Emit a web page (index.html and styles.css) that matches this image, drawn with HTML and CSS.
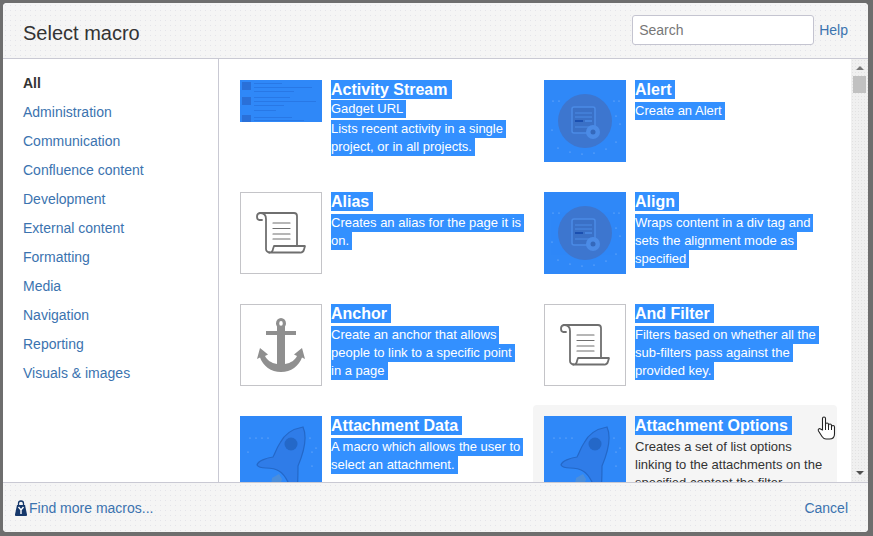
FILE: index.html
```html
<!DOCTYPE html>
<html lang="en">
<head>
    <meta charset="UTF-8">
    <title>Select macro</title>
    <link rel="stylesheet" href="styles.css">
</head>
<body>
    <svg class="icon-defs" width="0" height="0">
        <symbol id="icon-scroll" viewBox="0 0 82 82">
            <g fill="none" stroke="#6f6f6f" stroke-width="1.8" stroke-linejoin="round" stroke-linecap="round">
                <path d="M22 28 h-3 a2.5 3.5 0 0 1 -2 -3.5 a3.5 3.5 0 0 1 3 -3.5 h34 a3 3 0 0 1 3 3 v30"/>
                <path d="M20 21 c4 0 6 2 6 6 v30 a3.5 3.5 0 0 0 3.5 3.5"/>
                <path d="M29.5 60.5 h30 a4 4 0 0 0 4.5 -3 l1 -3.5 h-31 l-1 3 a3.5 3.5 0 0 1 -4 3.5"/>
                <path d="M33 31 h17 M33 36.500 h17 M33 42 h17 M33 47 h17" stroke-width="1.200"/>
            </g>
        </symbol>
        <symbol id="icon-gear" viewBox="0 0 82 82">
            <rect width="82" height="82" fill="#2f88f8"/>
            <g fill="#cfe3ff" opacity="0.6">
                <circle cx="9" cy="21" r="0.6"/><circle cx="15" cy="21" r="0.6"/><circle cx="70" cy="21" r="0.6"/><circle cx="75" cy="21" r="0.6"/>
                <circle cx="72" cy="36" r="0.6"/><circle cx="76" cy="44" r="0.6"/><circle cx="8" cy="50" r="0.6"/><circle cx="14" cy="68" r="0.6"/>
                <circle cx="26" cy="72" r="0.6"/><circle cx="38" cy="74" r="0.6"/><circle cx="50" cy="73" r="0.6"/><circle cx="62" cy="69" r="0.6"/><circle cx="72" cy="62" r="0.6"/>
            </g>
            <circle cx="41" cy="41" r="27" fill="#3d76cf"/>
            <rect x="28" y="27" width="23" height="26" rx="2" fill="#3a70c6" stroke="#4b8be6" stroke-width="1.500"/>
            <path d="M31 33 h17 M31 37 h17 M31 47 h17" stroke="#4b8be6"/>
            <path d="M31 41 h8" stroke="#1a4fb0" stroke-width="2"/>
            <path d="M41 41 h7" stroke="#4b8be6" stroke-width="1.500"/>
            <circle cx="49" cy="52" r="7" fill="#4b8be6"/>
            <circle cx="49" cy="52" r="2.500" fill="#3468bb"/>
        </symbol>
        <symbol id="icon-rocket" viewBox="0 0 82 82">
            <rect width="82" height="82" fill="#2f88f8"/>
            <g fill="#cfe3ff" opacity="0.6">
                <circle cx="10" cy="22" r="0.6"/><circle cx="16" cy="22" r="0.6"/><circle cx="22" cy="22" r="0.6"/><circle cx="28" cy="22" r="0.6"/>
                <circle cx="70" cy="22" r="0.6"/><circle cx="8" cy="36" r="0.6"/><circle cx="72" cy="36" r="0.6"/><circle cx="76" cy="32" r="0.6"/><circle cx="72" cy="50" r="0.6"/>
            </g>
            <path d="M32 62 l7 -4 l3 5 l-5 19 h-8 z" fill="#5f93c9" opacity="0.6"/>
            <path d="M63 11 C52 13 44 19 40 27 C36 33 35 38 33 41 C26 42 18 45 17 49 C19 52 23 52 26 52 C31 52 36 53 39 55 C44 58 46 62 48 66 L50 82 L56 82 C58 72 58 62 58 50 C63 38 68 22 63 11 Z" fill="#2f7ce8" stroke="#2468c8" stroke-width="1.200"/>
            <circle cx="51" cy="28" r="6.500" fill="#2468c8"/>
        </symbol>
    </svg>

    <div class="dialog">
        <div class="dialog-header">
            <h2>Select macro</h2>
            <div class="header-tools">
                <input type="text" class="search" placeholder="Search">
                <a class="link" href="#">Help</a>
            </div>
        </div>

        <div class="dialog-body">
            <ul class="categories">
                <li class="active">All</li>
                <li>Administration</li>
                <li>Communication</li>
                <li>Confluence content</li>
                <li>Development</li>
                <li>External content</li>
                <li>Formatting</li>
                <li>Media</li>
                <li>Navigation</li>
                <li>Reporting</li>
                <li>Visuals &amp; images</li>
            </ul>

            <div class="macro-list">
                <div class="macro">
                    <div class="thumb thumb-short">
                        <svg width="82" height="42" viewBox="0 0 82 42">
                            <rect width="82" height="42" fill="#2f88f8"/>
                            <g fill="#2a70d8">
                                <rect x="2" y="2" width="9" height="8"/>
                                <rect x="2" y="17" width="9" height="8"/>
                                <rect x="2" y="35" width="9" height="7"/>
                            </g>
                            <g fill="#2878e6">
                                <rect x="14" y="3" width="28" height="1"/>
                                <rect x="14" y="7" width="58" height="1"/>
                                <rect x="14" y="11" width="40" height="1"/>
                                <rect x="14" y="17" width="36" height="1"/>
                                <rect x="14" y="21" width="62" height="1"/>
                                <rect x="14" y="25" width="30" height="1"/>
                                <rect x="14" y="30" width="22" height="1"/>
                                <rect x="14" y="37" width="38" height="1"/>
                                <rect x="14" y="40" width="50" height="1"/>
                            </g>
                        </svg>
                    </div>
                    <div class="macro-text">
                        <div class="macro-title"><span class="sel">Activity Stream</span></div>
                        <div class="macro-sub"><span class="sel">Gadget URL</span></div>
                        <div class="macro-desc"><span class="sel">Lists recent activity in a single project, or in all projects.</span></div>
                    </div>
                </div>
                <div class="macro">
                    <div class="thumb"><svg width="82" height="82"><use href="#icon-gear"/></svg></div>
                    <div class="macro-text">
                        <div class="macro-title"><span class="sel">Alert</span></div>
                        <div class="macro-desc"><span class="sel">Create an Alert</span></div>
                    </div>
                </div>
                <div class="macro">
                    <div class="thumb thumb-plain"><svg width="80" height="80" viewBox="1 1 80 80"><use href="#icon-scroll" width="82" height="82"/></svg></div>
                    <div class="macro-text">
                        <div class="macro-title"><span class="sel">Alias</span></div>
                        <div class="macro-desc"><span class="sel">Creates an alias for the page it is on.</span></div>
                    </div>
                </div>
                <div class="macro">
                    <div class="thumb"><svg width="82" height="82"><use href="#icon-gear"/></svg></div>
                    <div class="macro-text">
                        <div class="macro-title"><span class="sel">Align</span></div>
                        <div class="macro-desc"><span class="sel">Wraps content in a div tag and sets the alignment mode as specified</span></div>
                    </div>
                </div>
                <div class="macro">
                    <div class="thumb thumb-plain">
                        <svg width="80" height="80" viewBox="1 1 80 80">
                            <path fill="#8f8f8f" fill-rule="evenodd" d="M41 14 a5 5.500 0 0 1 5 5.500 a5 5 0 0 1 -1 3 V27 H56 V31 H45 V60 C51 59 55 56 57 52 L54 50.500 L62 44 L65 55 L62 53.500 C59 62 51 68 41 68 S23 62 20 53.500 L17 55 L20 44 L28 50.500 L25 52 C27 56 31 59 37 60 V31 H26 V27 H37 V22.500 a5 5 0 0 1 -1 -3 a5 5.500 0 0 1 5 -5.500 z M41 17 a1.800 2.400 0 0 0 0 4.800 a1.800 2.400 0 0 0 0 -4.800 z"/>
                        </svg>
                    </div>
                    <div class="macro-text">
                        <div class="macro-title"><span class="sel">Anchor</span></div>
                        <div class="macro-desc"><span class="sel">Create an anchor that allows people to link to a specific point in a page</span></div>
                    </div>
                </div>
                <div class="macro">
                    <div class="thumb thumb-plain"><svg width="80" height="80" viewBox="1 1 80 80"><use href="#icon-scroll" width="82" height="82"/></svg></div>
                    <div class="macro-text">
                        <div class="macro-title"><span class="sel">And Filter</span></div>
                        <div class="macro-desc"><span class="sel">Filters based on whether all the sub-filters pass against the provided key.</span></div>
                    </div>
                </div>
                <div class="macro">
                    <div class="thumb"><svg width="82" height="82"><use href="#icon-rocket"/></svg></div>
                    <div class="macro-text">
                        <div class="macro-title"><span class="sel">Attachment Data</span></div>
                        <div class="macro-desc"><span class="sel">A macro which allows the user to select an attachment.</span></div>
                    </div>
                </div>
                <div class="macro macro-hover">
                    <div class="thumb"><svg width="82" height="82"><use href="#icon-rocket"/></svg></div>
                    <div class="macro-text">
                        <div class="macro-title"><span class="sel">Attachment Options</span></div>
                        <div class="macro-desc">Creates a set of list options linking to the attachments on the specified content the filter</div>
                    </div>
                </div>
            </div>

            <div class="scrollbar">
                <span class="arrow-up"></span>
                <span class="scroll-thumb"></span>
                <span class="arrow-down"></span>
            </div>

            <!-- mouse pointer in the shot -->
            <svg class="cursor" width="20" height="25" viewBox="0 0 20 25">
                <path d="M5.500 14 V2.500 a1.500 1.500 0 0 1 3 0 V10 V8.500 a1.500 1.500 0 0 1 3 0 V11 V9.500 a1.500 1.500 0 0 1 3 0 V12 V11 a1.500 1.500 0 0 1 3 0 V18 c0 3 -2 5 -5 5 H9 c-2 0 -3 -1 -4 -2.500 L1.500 15 c-1 -2 1 -3 2 -2 z" fill="#fff" stroke="#222" stroke-width="1.100" stroke-linejoin="round"/>
                <path d="M8.500 10 v4 M11.500 11 v3 M14.500 12 v2" stroke="#222" fill="none"/>
            </svg>
        </div>

        <div class="dialog-footer">
            <a class="link find-more" href="#">
                <svg width="12" height="16" viewBox="0 0 12 16">
                    <path d="M3.500 5 V3.500 a2.500 2.500 0 0 1 5 0 V5" fill="none" stroke="#16386b" stroke-width="1.300"/>
                    <path d="M2 5 h8 l2 9.500 a1.200 1.200 0 0 1 -1.200 1.500 H1.200 A1.200 1.200 0 0 1 0 14.500 z" fill="#16386b"/>
                    <path d="M3.500 7 L6 10 L8.500 7 M6 10 V14" fill="none" stroke="#fff" stroke-width="1.400"/>
                </svg>
                <span>Find more macros...</span>
            </a>
            <a class="link" href="#">Cancel</a>
        </div>
    </div>
</body>
</html>
```

FILE: styles.css
```css
* {
    margin: 0;
    padding: 0;
    box-sizing: border-box;
}

html, body {
    height: 100%;
    overflow: hidden;
}

body {
    font-family: "Liberation Sans", Arial, sans-serif;
    font-size: 14px;
    color: #333;
    background: #6e6e6e;
    padding: 3px 5px 4px 3px;
}

.icon-defs {
    position: absolute;
}

.dialog {
    height: 100%;
    display: flex;
    flex-direction: column;
    background: #fff;
    border-radius: 4px;
    overflow: hidden;
}

.dialog-header,
.dialog-footer {
    flex: none;
    display: flex;
    justify-content: space-between;
    align-items: center;
    background-color: #f5f5f5;
    background-image: radial-gradient(circle, #e4e4ea 0.7px, transparent 0.9px);
    background-size: 5px 5px;
    padding: 0 20px;
}

.dialog-header {
    height: 56px;
    border-bottom: 1px solid #c9c9d3;
}

.dialog-header h2 {
    font-size: 20px;
    font-weight: 400;
    color: #333;
    margin-top: 5px;
}

.header-tools {
    display: flex;
    align-items: center;
    gap: 5px;
    margin-top: -1px;
}

.search {
    width: 182px;
    height: 30px;
    padding: 0 6px;
    border: 1px solid #c4c4d0;
    border-radius: 3px;
    font-family: inherit;
    font-size: 14px;
    background: #fff;
}

.search::placeholder {
    color: #777;
    opacity: 1;
}

.link {
    color: #3b73af;
    text-decoration: none;
}

.dialog-body {
    flex: 1;
    min-height: 0;
    display: flex;
    position: relative;
}

.categories {
    flex: none;
    width: 216px;
    padding: 10px 0 0 20px;
    border-right: 1px solid #c9c9d3;
    list-style: none;
}

.categories li {
    height: 29px;
    line-height: 29px;
    color: #3b73af;
}

.categories li.active {
    color: #333;
    font-weight: 700;
}

.macro-list {
    flex: 1;
    min-width: 0;
    overflow: hidden;
    display: grid;
    grid-template-columns: 304px 304px;
    grid-auto-rows: 112px;
    padding: 10px 0 0 10px;
}

.macro {
    display: flex;
    gap: 9px;
    padding: 11px 8px 11px 11px;
    border-radius: 4px;
}

.macro-hover {
    background: #f5f5f5;
}

.thumb {
    flex: none;
    width: 82px;
    height: 82px;
}

.thumb svg {
    display: block;
}

.thumb-short {
    height: 42px;
}

.thumb-plain {
    border: 1px solid #c4c4c8;
    background: #fff;
}

.macro-text {
    flex: 1;
    min-width: 0;
}

.macro-title {
    font-size: 16px;
    font-weight: 700;
    line-height: 20px;
    margin-bottom: 2px;
}

.macro-sub {
    font-size: 13px;
    line-height: 18px;
    margin-top: -2px;
    margin-bottom: 2px;
}

.macro-desc {
    font-size: 13px;
    line-height: 18px;
}

/* the text is selected in the shot */
.sel {
    background: #3390ff;
    color: #fff;
    padding: 1px 3px 2px 0;
    -webkit-box-decoration-break: clone;
    box-decoration-break: clone;
}

.macro-title .sel {
    padding: 1px 4px 1px 0;
}

.scrollbar {
    flex: none;
    width: 17px;
    display: flex;
    flex-direction: column;
    align-items: center;
    background-color: #f0f0f0;
    background-image: radial-gradient(circle, #e2e2e2 0.6px, transparent 0.8px);
    background-size: 3px 3px;
    padding: 7px 0;
}

.arrow-up,
.arrow-down {
    width: 0;
    height: 0;
    border-left: 4px solid transparent;
    border-right: 4px solid transparent;
}

.arrow-up {
    border-bottom: 4px solid #777;
}

.arrow-down {
    border-top: 4px solid #505050;
    margin-top: auto;
}

.scroll-thumb {
    width: 13px;
    height: 17px;
    margin-top: 6px;
    background: #c1c1c1;
}

.cursor {
    position: absolute;
    left: 814px;
    top: 357px;
}

.dialog-footer {
    height: 50px;
    border-top: 1px solid #c9c9d3;
}

.find-more {
    display: flex;
    align-items: center;
    gap: 2px;
    margin-left: -8px;
}
```
